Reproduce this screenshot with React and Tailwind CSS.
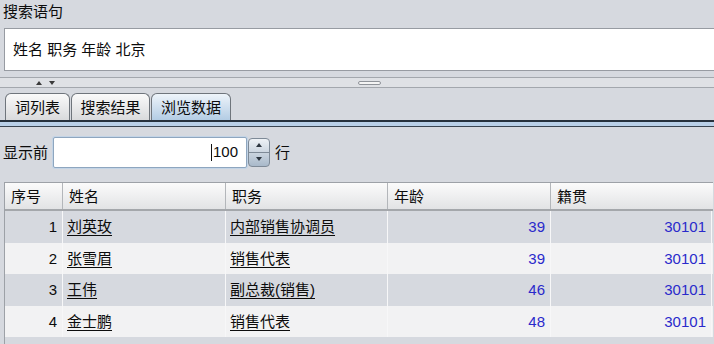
import React from "react";

const rows = [
  { id: 1, name: "刘英玫", title: "内部销售协调员", age: 39, place: 30101 },
  { id: 2, name: "张雪眉", title: "销售代表", age: 39, place: 30101 },
  { id: 3, name: "王伟", title: "副总裁(销售)", age: 46, place: 30101 },
  { id: 4, name: "金士鹏", title: "销售代表", age: 48, place: 30101 },
];

const cols = [
  { label: "序号", w: "w-[57px]" },
  { label: "姓名", w: "w-[163px]" },
  { label: "职务", w: "w-[162px]" },
  { label: "年龄", w: "w-[163px]" },
  { label: "籍贯", w: "w-[162px]" },
];

const Tab = ({ label, active, width }) => (
  <div
    className={`${width} h-[27px] mr-[1px] rounded-t-[6px] border border-b-0 border-[#6f757c] flex items-center justify-center text-[15px] leading-none ${
      active
        ? "bg-gradient-to-b from-[#eef4fa] to-[#b3cce4]"
        : "bg-gradient-to-b from-[#fafafa] to-[#d9dadc]"
    }`}
  >
    {label}
  </div>
);

const App = () => {
  return (
    <div className="w-[714px] h-[344px] overflow-hidden bg-[#d6d9df] text-[#0c0c0c] font-['Liberation_Sans','Noto_Sans_CJK_SC',sans-serif]">
      {/* search sentence */}
      <div className="h-[28px] pl-[3px] text-[15px] leading-[24px]">搜索语句</div>
      <div className="ml-[4px] h-[43px] bg-white border-y border-l border-[#979ba2] flex items-center pl-[8px] text-[15px] leading-none">
        姓名 职务 年龄 北京
      </div>

      {/* splitter */}
      <div className="mt-[6px] h-[11px] border-y border-[#a3a7ad] bg-[#dfe1e5] relative">
        <svg className="absolute left-[36px] top-[2px]" width="20" height="6" viewBox="0 0 20 6">
          <path d="M0 5 L3 1 L6 5 Z" fill="#3a3a3a" />
          <path d="M13 1 L19 1 L16 5 Z" fill="#3a3a3a" />
        </svg>
        <div className="absolute left-[358px] top-[3px] w-[23px] h-[4px] rounded-full border border-[#8f9399] bg-[#f4f4f4]" />
      </div>

      {/* tabs */}
      <div className="mt-[5px] pl-[5px] flex items-end">
        <Tab label="词列表" width="w-[65px]" />
        <Tab label="搜索结果" width="w-[79px]" />
        <Tab label="浏览数据" width="w-[80px]" active />
      </div>
      <div className="h-[2px] bg-[#26313d]" />
      <div className="h-[4px] bg-[#b9d0e8]" />
      <div className="h-[1px] bg-[#3b4652]" />

      {/* show top N */}
      <div className="mt-[9px] h-[32px] flex items-center pl-[3px]">
        <span className="text-[15px] leading-none w-[50px]">显示前</span>
        <div className="w-[194px] h-[31px] bg-white border border-[#8ea6bf] rounded-[2px] shadow-[0_0_0_1px_#c3d4e6] flex items-center justify-end pr-[8px] text-[15px]">
          <span className="w-[1px] h-[17px] bg-[#111] mr-[1px]" />
          <span>100</span>
        </div>
        <div className="ml-[1px] w-[22px] h-[29px] rounded-[4px] border border-[#7e8a97] bg-gradient-to-b from-[#eef2f6] to-[#a9b9ca] flex flex-col">
          <div className="flex-1 flex items-center justify-center border-b border-[#7e8a97]">
            <svg width="6" height="4" viewBox="0 0 6 4"><path d="M0 4 L3 0 L6 4 Z" fill="#2d3640" /></svg>
          </div>
          <div className="flex-1 flex items-center justify-center">
            <svg width="6" height="4" viewBox="0 0 6 4"><path d="M0 0 L6 0 L3 4 Z" fill="#2d3640" /></svg>
          </div>
        </div>
        <span className="ml-[5px] text-[15px] leading-none">行</span>
      </div>

      {/* table */}
      <div className="mt-[14px] ml-[4px] w-[709px] h-[200px] border-l border-t border-[#9da1a7]">
        <div className="flex h-[28px] bg-gradient-to-b from-[#fbfbfb] to-[#e2e3e5] border-b-2 border-[#a4a7ab]">
          {cols.map((c, i) => (
            <div
              key={c.label}
              className={`${c.w} flex items-center pl-[6px] text-[15px] leading-none ${
                i > 0 ? "border-l border-[#b3b6ba]" : ""
              }`}
            >
              {c.label}
            </div>
          ))}
        </div>
        {rows.map((r, i) => (
          <div
            key={r.id}
            className={`flex h-[31.5px] text-[15px] leading-none ${
              i % 2 === 0 ? "bg-[#d6d9df]" : "bg-[#f2f2f3]"
            }`}
          >
            <div className="w-[57px] flex items-center justify-end pr-[5px]">{r.id}</div>
            <div className="w-[163px] flex items-center pl-[4px] border-l border-[#f7f7f8]">
              <span className="underline underline-offset-[3px]">{r.name}</span>
            </div>
            <div className="w-[162px] flex items-center pl-[4px] border-l border-[#f7f7f8]">
              <span className="underline underline-offset-[3px]">{r.title}</span>
            </div>
            <div className="w-[163px] flex items-center justify-end pr-[5px] border-l border-[#f7f7f8] text-[#2a2acb]">
              {r.age}
            </div>
            <div className="w-[162px] flex items-center justify-end pr-[5px] border-x border-[#f7f7f8] text-[#2a2acb]">
              {r.place}
            </div>
          </div>
        ))}
      </div>
    </div>
  );
};

export default App;
